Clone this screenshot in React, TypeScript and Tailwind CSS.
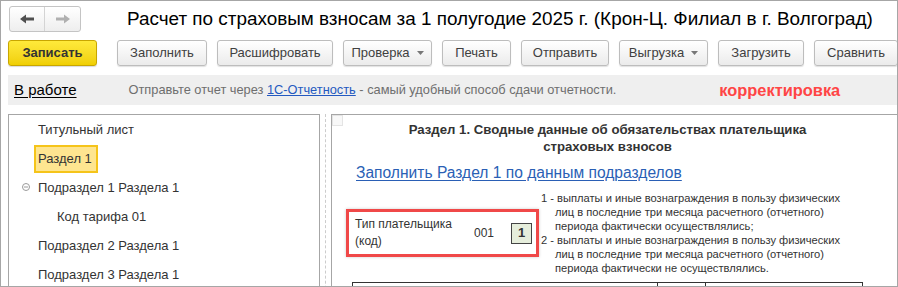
import React from "react";

function Arrow({ dir, color }: { dir: "left" | "right"; color: string }) {
  return (
    <svg width="14" height="10" viewBox="0 0 14 10" className={dir === "right" ? "rotate-180" : ""}>
      <polygon points="0,5 6,0.5 6,3.5 14,3.5 14,6.5 6,6.5 6,9.5" fill={color} />
    </svg>
  );
}

function Caret() {
  return (
    <svg width="7" height="4" viewBox="0 0 7 4" className="ml-[7px]">
      <polygon points="0,0 7,0 3.5,4" fill="#777" />
    </svg>
  );
}

function Btn({ label, w, caret }: { label: string; w: string; caret?: boolean }) {
  return (
    <div
      className={`${w} h-[26px] shrink-0 flex items-center justify-center rounded-[3px] border border-[#bdbdbd] bg-gradient-to-b from-white to-[#ebebeb] text-[13px] text-[#404040] shadow-[0_1px_1px_rgba(0,0,0,0.12)]`}
    >
      {label}
      {caret && <Caret />}
    </div>
  );
}

const tree = [
  { label: "Титульный лист", pl: "pl-[29px]" },
  { label: "Раздел 1", pl: "pl-[25px]", active: true },
  { label: "Подраздел 1 Раздела 1", pl: "pl-[29px]", toggle: true },
  { label: "Код тарифа 01", pl: "pl-[48px]" },
  { label: "Подраздел 2 Раздела 1", pl: "pl-[29px]" },
  { label: "Подраздел 3 Раздела 1", pl: "pl-[29px]" },
];

export default function App() {
  return (
    <div className="w-[898px] h-[287px] overflow-hidden border border-[#a6a6a6] bg-white flex flex-col font-['Liberation_Sans',Arial,sans-serif]">
      {/* Header */}
      <div className="shrink-0 flex items-center pl-[8px] pt-[5px]">
        <div className="flex h-[26px] w-[72px] rounded-[3px] border border-[#c4c4c4] bg-gradient-to-b from-white to-[#eeeeee]">
          <div className="w-1/2 flex items-center justify-center border-r border-[#d4d4d4]">
            <Arrow dir="left" color="#505050" />
          </div>
          <div className="w-1/2 flex items-center justify-center">
            <Arrow dir="right" color="#b0b0b0" />
          </div>
        </div>
        <div className="ml-[46px] text-[18.9px] text-black whitespace-nowrap leading-none">
          Расчет по страховым взносам за 1 полугодие 2025 г. (Крон-Ц. Филиал в г. Волгоград)
        </div>
      </div>

      {/* Toolbar */}
      <div className="shrink-0 flex mt-[8px] pl-[7px] gap-[10px]">
        <div className="w-[89px] h-[26px] shrink-0 flex items-center justify-center rounded-[3px] border border-[#c8a600] bg-gradient-to-b from-[#ffea3a] to-[#f0cf00] text-[13px] font-bold text-[#333] shadow-[0_1px_1px_rgba(0,0,0,0.15)]">
          Записать
        </div>
        <div className="ml-[10px]">
          <Btn label="Заполнить" w="w-[90px]" />
        </div>
        <Btn label="Расшифровать" w="w-[116px]" />
        <Btn label="Проверка" w="w-[89px]" caret />
        <Btn label="Печать" w="w-[69px]" />
        <Btn label="Отправить" w="w-[88px]" />
        <Btn label="Выгрузка" w="w-[89px]" caret />
        <Btn label="Загрузить" w="w-[86px]" />
        <Btn label="Сравнить" w="w-[84px]" />
      </div>

      {/* Info bar */}
      <div className="shrink-0 mt-[9px] ml-[7px] h-[30px] bg-[#efefef] flex items-center pl-[6px] whitespace-nowrap">
        <span className="text-[15px] text-black underline underline-offset-2">В работе</span>
        <span className="ml-[52px] text-[12.8px] text-[#6e6e6e]">
          Отправьте отчет через <span className="text-[#2459c0] underline">1С-Отчетность</span> - самый удобный способ сдачи отчетности.
        </span>
        <span className="ml-[103px] text-[16.4px] font-bold text-[#ff4545]">корректировка</span>
      </div>

      {/* Panels */}
      <div className="mt-[9px] ml-[7px] flex h-[200px] shrink-0">
        <div className="w-[312px] border border-[#a6a6a6] text-[13px] text-[#333]">
          {tree.map((t) => (
            <div key={t.label} className={`h-[29px] flex items-center ${t.pl} relative`}>
              {t.toggle && (
                <svg width="8" height="8" viewBox="0 0 8 8" className="absolute left-[13px] top-[10px]">
                  <circle cx="4" cy="4" r="3.5" fill="none" stroke="#9a9a9a" strokeWidth="1" />
                  <line x1="2" y1="4" x2="6" y2="4" stroke="#9a9a9a" strokeWidth="1" />
                </svg>
              )}
              {t.active ? (
                <div className="h-[28px] flex items-center pl-[2px] pr-[4px] border-2 border-[#f5c41a] bg-[#fee590]">
                  {t.label}
                </div>
              ) : (
                t.label
              )}
            </div>
          ))}
        </div>

        <div className="w-[11px] flex justify-center">
          <div className="border-l border-dashed border-[#cccccc]" />
        </div>

        <div className="flex-1 border-l border-t border-[#a6a6a6] relative">
          <div className="absolute left-0 top-0 w-[11px] h-[11px] border border-[#e4e4e4] bg-[#f8f8f8]" />
          <div className="ml-[20px] w-[511px] pt-[6px]">
            <div className="text-center text-[13.2px] font-bold text-[#333] leading-[17px]">
              Раздел 1. Сводные данные об обязательствах плательщика
              <br />
              страховых взносов
            </div>
            <div className="mt-[8px] ml-[4px] text-[15.6px] leading-[19px] text-[#2a5fb5] underline underline-offset-2">
              Заполнить Раздел 1 по данным подразделов
            </div>
            <div className="flex items-start mt-[9px] ml-[-6px]">
              <div className="mt-[18px] w-[193px] h-[48px] shrink-0 border-[3px] border-[#f04848] shadow-[0_0_3px_rgba(0,0,0,0.2)] flex items-center pl-[6px] text-[12px] text-[#333]">
                <div className="w-[119px] leading-[17px]">
                  Тип плательщика
                  <br />
                  (код)
                </div>
                <div className="w-[37px]">001</div>
                <div className="w-[21px] h-[21px] flex items-center justify-center border border-[#444] bg-[#e6eedc] font-bold text-[13px]">
                  1
                </div>
              </div>
              <div className="ml-[2px] text-[11.15px] leading-[14px] text-[#333] whitespace-nowrap">
                <div className="pl-[14px] -indent-[14px]">
                  1 - выплаты и иные вознаграждения в пользу физических
                  <br />
                  лиц в последние три месяца расчетного (отчетного)
                  <br />
                  периода фактически осуществлялись;
                </div>
                <div className="pl-[14px] -indent-[14px]">
                  2 - выплаты и иные вознаграждения в пользу физических
                  <br />
                  лиц в последние три месяца расчетного (отчетного)
                  <br />
                  периода фактически не осуществлялись.
                </div>
              </div>
            </div>
            <div className="mt-[7px] flex h-[20px] border-t border-l border-r border-[#333]">
              <div className="w-[305px] border-r border-[#333]" />
              <div className="w-[48px] border-r border-[#333]" />
              <div className="flex-1" />
            </div>
          </div>
        </div>
      </div>
    </div>
  );
}
